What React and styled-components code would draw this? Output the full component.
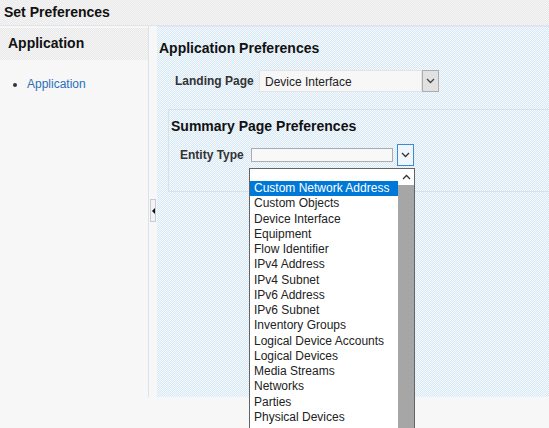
import React from 'react';
import styled, { createGlobalStyle } from 'styled-components';

const GlobalStyle = createGlobalStyle`
  html, body { margin: 0; padding: 0; }
  body { font-family: 'Liberation Sans', Arial, sans-serif; }
`;

const blueDither = `repeating-conic-gradient(#d6e8f6 0 25%, #f6fafd 0 50%) 0 0 / 2px 2px`;
const greyDither = `repeating-conic-gradient(#e9e9e9 0 25%, #f5f5f5 0 50%) 0 0 / 2px 2px`;

const entities = [
  'Custom Network Address',
  'Custom Objects',
  'Device Interface',
  'Equipment',
  'Flow Identifier',
  'IPv4 Address',
  'IPv4 Subnet',
  'IPv6 Address',
  'IPv6 Subnet',
  'Inventory Groups',
  'Logical Device Accounts',
  'Logical Devices',
  'Media Streams',
  'Networks',
  'Parties',
  'Physical Devices',
];

const Page = styled.div`
  position: relative;
  width: 549px;
  height: 428px;
  overflow: hidden;
  background: #f7f7f7;
  color: #222;
`;

const TitleBar = styled.div`
  height: 26px;
  box-sizing: border-box;
  padding: 4px 0 0 4px;
  background: ${greyDither};
  border-bottom: 1px solid #dfe3ea;
  font-size: 14px;
  font-weight: bold;
  color: #111;
`;

const Body = styled.div`
  display: flex;
  height: 371px;
`;

const Sidebar = styled.div`
  width: 149px;
  flex-shrink: 0;
  box-sizing: border-box;
  border-right: 1px solid #dce1ea;
  padding-top: 2px;
`;

const SideHeader = styled.div`
  height: 32px;
  box-sizing: border-box;
  padding: 7px 0 0 8px;
  background: ${greyDither};
  font-size: 14px;
  font-weight: bold;
  color: #111;
`;

const SideList = styled.ul`
  margin: 17px 0 0;
  padding-left: 27px;
  font-size: 12px;
  li { color: #333; }
  a { color: #2a6fb8; text-decoration: none; }
`;

const Splitter = styled.div`
  width: 8px;
  flex-shrink: 0;
  display: flex;
  justify-content: center;
  padding-top: 173px;
`;

const Handle = styled.div`
  width: 4px;
  height: 21px;
  border: 1px solid #c6ccd6;
  background: #f3f3f3;
  display: flex;
  align-items: center;
  justify-content: center;
  &::after {
    content: '';
    border-style: solid;
    border-width: 3px 3px 3px 0;
    border-color: transparent #111 transparent transparent;
  }
`;

const Content = styled.div`
  flex: 1;
  background: ${blueDither};
  border-top: 1px solid #dbe7f2;
  padding: 13px 0 0 2px;
`;

const SectionTitle = styled.div`
  font-size: 14px;
  line-height: 16px;
  font-weight: bold;
  color: #111;
`;

const FieldRow = styled.div`
  display: flex;
  align-items: center;
  margin: ${p => p.$margin};
`;

const Label = styled.div`
  font-size: 12px;
  font-weight: bold;
  color: #333;
  width: ${p => p.$width}px;
  box-sizing: border-box;
  padding-left: ${p => p.$pad}px;
`;

const SelectBox = styled.div`
  width: 163px;
  height: 22px;
  box-sizing: border-box;
  background: #f7f7f7;
  border: 1px solid #e4e4e4;
  font-size: 12px;
  color: #222;
  padding: 4px 0 0 5px;
`;

const SelectButton = styled.div`
  width: 17px;
  height: 22px;
  box-sizing: border-box;
  background: #e1e1e1;
  border: 1px solid #adadad;
  display: flex;
  align-items: center;
  justify-content: center;
`;

const SummaryBox = styled.div`
  margin: 17px 0 0 9px;
  height: 83px;
  box-sizing: border-box;
  border: 1px solid #d3e2ef;
  border-right: none;
  padding: 8px 0 0 2px;
`;

const EntityInput = styled.div`
  width: 142px;
  height: 14px;
  box-sizing: border-box;
  background: #f8f8f8;
  border: 1px solid #acacac;
`;

const EntityButton = styled.div`
  margin-left: 4px;
  width: 17px;
  height: 22px;
  box-sizing: border-box;
  background: #f0f6fb;
  border: 1px solid #3a8ad6;
  display: flex;
  align-items: center;
  justify-content: center;
`;

const Dropdown = styled.div`
  position: absolute;
  left: 249px;
  top: 168px;
  width: 166px;
  height: 270px;
  box-sizing: border-box;
  background: #fff;
  border: 1px solid #646464;
  display: flex;
`;

const Options = styled.div`
  flex: 1;
  padding-top: 12px;
`;

const Option = styled.div`
  height: 15.25px;
  line-height: 15px;
  padding-left: 4px;
  font-size: 12px;
  white-space: nowrap;
  color: ${p => (p.$active ? '#fff' : '#222')};
  background: ${p => (p.$active ? '#0078d7' : 'transparent')};
`;

const ScrollBar = styled.div`
  width: 16px;
  display: flex;
  flex-direction: column;
  background: #f0f0f0;
`;

const ScrollArrow = styled.div`
  height: 16px;
  display: flex;
  align-items: center;
  justify-content: center;
  background: #fff;
`;

const ScrollThumb = styled.div`
  flex: 1;
  background: #a6a6a6;
`;

const Chevron = ({ up, color = '#444' }) => (
  <svg width="9" height="6" viewBox="0 0 9 6">
    <path
      d={up ? 'M1 5 L4.5 1.5 L8 5' : 'M1 1 L4.5 4.5 L8 1'}
      fill="none"
      stroke={color}
      strokeWidth="1.3"
    />
  </svg>
);

export default function App() {
  return (
    <Page>
      <GlobalStyle />
      <TitleBar>Set Preferences</TitleBar>
      <Body>
        <Sidebar>
          <SideHeader>Application</SideHeader>
          <SideList>
            <li><a href="#">Application</a></li>
          </SideList>
        </Sidebar>
        <Splitter>
          <Handle />
        </Splitter>
        <Content>
          <SectionTitle>Application Preferences</SectionTitle>
          <FieldRow $margin="14px 0 0 0">
            <Label $width={100} $pad={16}>Landing Page</Label>
            <SelectBox>Device Interface</SelectBox>
            <SelectButton><Chevron /></SelectButton>
          </FieldRow>
          <SummaryBox>
            <SectionTitle>Summary Page Preferences</SectionTitle>
            <FieldRow $margin="10px 0 0 0">
              <Label $width={80} $pad={9}>Entity Type</Label>
              <EntityInput />
              <EntityButton><Chevron color="#333" /></EntityButton>
            </FieldRow>
          </SummaryBox>
        </Content>
      </Body>
      <Dropdown>
        <Options>
          {entities.map((e, i) => (
            <Option key={e} $active={i === 0}>{e}</Option>
          ))}
        </Options>
        <ScrollBar>
          <ScrollArrow><Chevron up color="#333" /></ScrollArrow>
          <ScrollThumb />
        </ScrollBar>
      </Dropdown>
    </Page>
  );
}
